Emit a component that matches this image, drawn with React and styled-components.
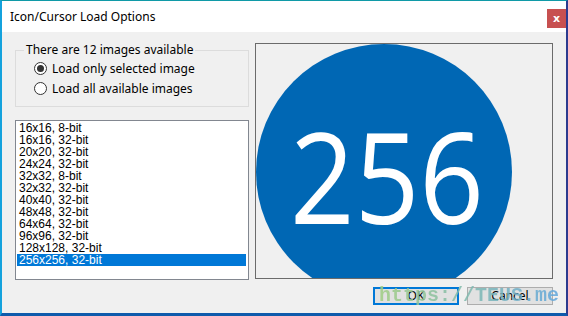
import React, { useState } from 'react';
import styled, { createGlobalStyle } from 'styled-components';

const GlobalStyle = createGlobalStyle`
  html, body {
    margin: 0;
    padding: 0;
    overflow: hidden;
  }
  body {
    width: 568px;
    height: 316px;
    font-family: 'Noto Sans', 'Open Sans', sans-serif;
    font-size: 12px;
  }
  * {
    box-sizing: border-box;
  }
`;

const Frame = styled.div`
  position: relative;
  width: 568px;
  height: 316px;
  border-top: 1px solid #109aa7;
  border-left: 2px solid #14a2dd;
  border-right: 2px solid #2c3b8f;
  border-bottom: 3px solid #0e5aab;
  display: flex;
  flex-direction: column;
  background: #f0f0f0;
`;

const TitleBar = styled.div`
  height: 31px;
  background: #fff;
  display: flex;
  align-items: flex-start;
  justify-content: space-between;
`;

const Title = styled.div`
  padding: 8px 0 0 8px;
  font-size: 12px;
  line-height: 16px;
  color: #000;
`;

const CloseButton = styled.button`
  margin-top: 8px;
  width: 19px;
  height: 19px;
  border: 0;
  padding: 0;
  background: #c75050;
  color: #fff;
  font-family: 'DejaVu Sans', sans-serif;
  font-weight: 700;
  font-size: 11px;
  line-height: 19px;
  text-align: center;
`;

const Body = styled.div`
  flex: 1;
  padding: 11px 13px 0 13px;
  display: flex;
  flex-direction: column;
`;

const MainRow = styled.div`
  display: flex;
  gap: 6px;
`;

const LeftColumn = styled.div`
  width: 234px;
  display: flex;
  flex-direction: column;
  gap: 13px;
`;

const GroupBox = styled.fieldset`
  margin: 0;
  padding: 1px 0 8px 0;
  border: 1px solid #dcdcdc;
  min-inline-size: 0;
`;

const Legend = styled.legend`
  margin-left: 8px;
  padding: 0 2px;
  line-height: 14px;
  color: #000;
`;

const RadioRow = styled.label`
  display: flex;
  align-items: center;
  gap: 5px;
  height: 20px;
  padding-left: 18px;
  color: #000;
`;

const RadioCircle = styled.span`
  width: 13px;
  height: 13px;
  border-radius: 50%;
  border: 1px solid #333;
  background: #fff;
  display: flex;
  align-items: center;
  justify-content: center;
  &::after {
    content: '';
    width: 7px;
    height: 7px;
    border-radius: 50%;
    background: ${(p) => (p.$checked ? '#333' : 'transparent')};
  }
`;

const ListBox = styled.div`
  height: 160px;
  border: 1px solid #828790;
  background: #fff;
  padding: 1px;
`;

const ListItem = styled.div`
  height: 12px;
  line-height: 12px;
  padding-left: 2px;
  margin-right: 1px;
  font-family: 'Liberation Sans', Arial, sans-serif;
  font-size: 12px;
  white-space: nowrap;
  color: ${(p) => (p.$selected ? '#fff' : '#000')};
  background: ${(p) => (p.$selected ? '#0078d7' : 'transparent')};
`;

const Preview = styled.div`
  width: 298px;
  height: 236px;
  border: 1px solid #6b6b6b;
  background: #f0f0f0;
  overflow: hidden;
`;

const ButtonRow = styled.div`
  display: flex;
  justify-content: flex-end;
  gap: 8px;
  margin-top: 7px;
`;

const DialogButton = styled.button`
  width: 86px;
  height: 18px;
  padding: 0;
  font-family: 'Noto Sans', sans-serif;
  font-size: 12px;
  line-height: 14px;
  color: #000;
  background: #e1e1e1;
  border: ${(p) => (p.$default ? '2px solid #0078d7' : '1px solid #adadad')};
`;

const Watermark = styled.div`
  position: absolute;
  left: 377px;
  top: 285px;
  font-family: 'Liberation Mono', monospace;
  font-weight: 700;
  font-size: 20px;
  line-height: 20px;
  background: linear-gradient(90deg, rgba(160, 205, 130, 0.85), rgba(95, 165, 220, 0.85));
  -webkit-background-clip: text;
  background-clip: text;
  color: transparent;
  pointer-events: none;
`;

const sizes = [
  '16x16, 8-bit',
  '16x16, 32-bit',
  '20x20, 32-bit',
  '24x24, 32-bit',
  '32x32, 8-bit',
  '32x32, 32-bit',
  '40x40, 32-bit',
  '48x48, 32-bit',
  '64x64, 32-bit',
  '96x96, 32-bit',
  '128x128, 32-bit',
  '256x256, 32-bit',
];

const IconImage = () => (
  <svg width="256" height="256" viewBox="0 0 256 256">
    <circle cx="128" cy="128" r="128" fill="#0067b4" />
    <text
      x="34"
      y="180"
      fill="#fff"
      fontFamily="'Open Sans', 'Noto Sans', sans-serif"
      fontSize="126"
      textLength="194"
      lengthAdjust="spacingAndGlyphs"
    >
      256
    </text>
  </svg>
);

export default function App() {
  const [mode, setMode] = useState('selected');
  const [selected, setSelected] = useState(11);

  return (
    <>
      <GlobalStyle />
      <Frame>
        <TitleBar>
          <Title>Icon/Cursor Load Options</Title>
          <CloseButton>x</CloseButton>
        </TitleBar>
        <Body>
          <MainRow>
            <LeftColumn>
              <GroupBox>
                <Legend>There are 12 images available</Legend>
                <RadioRow onClick={() => setMode('selected')}>
                  <RadioCircle $checked={mode === 'selected'} />
                  Load only selected image
                </RadioRow>
                <RadioRow onClick={() => setMode('all')}>
                  <RadioCircle $checked={mode === 'all'} />
                  Load all available images
                </RadioRow>
              </GroupBox>
              <ListBox>
                {sizes.map((s, i) => (
                  <ListItem key={s + i} $selected={i === selected} onClick={() => setSelected(i)}>
                    {s}
                  </ListItem>
                ))}
              </ListBox>
            </LeftColumn>
            <Preview>
              <IconImage />
            </Preview>
          </MainRow>
          <ButtonRow>
            <DialogButton $default>OK</DialogButton>
            <DialogButton>Cancel</DialogButton>
          </ButtonRow>
        </Body>
        <Watermark>https://TEUS.me</Watermark>
      </Frame>
    </>
  );
}
